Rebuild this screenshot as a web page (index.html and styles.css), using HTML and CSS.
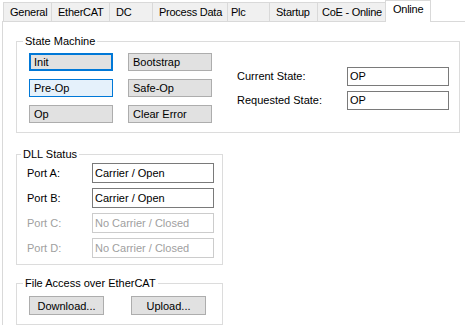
FILE: index.html
```html
<!DOCTYPE html>
<html lang="en">
  <head>
    <meta charset="UTF-8" />
    <title>Online</title>
    <link rel="stylesheet" href="styles.css">
  </head>
  <body>
    <div class="tabs">
      <div class="tab tab-general">General</div>
      <div class="tab tab-ethercat">EtherCAT</div>
      <div class="tab tab-dc">DC</div>
      <div class="tab tab-pdo">Process Data</div>
      <div class="tab tab-plc">Plc</div>
      <div class="tab tab-startup">Startup</div>
      <div class="tab tab-coe">CoE - Online</div>
      <div class="tab tab-online active">Online</div>
    </div>

    <div class="page">
      <fieldset class="group state-machine">
        <legend>State Machine</legend>
        <div class="sm-body">
          <div class="sm-buttons">
            <button class="btn focused">Init</button>
            <button class="btn">Bootstrap</button>
            <button class="btn hover">Pre-Op</button>
            <button class="btn">Safe-Op</button>
            <button class="btn">Op</button>
            <button class="btn">Clear Error</button>
          </div>
          <div class="sm-state">
            <label>Current State:</label>
            <div class="field">OP</div>
            <label>Requested State:</label>
            <div class="field">OP</div>
          </div>
        </div>
      </fieldset>

      <fieldset class="group dll">
        <legend>DLL Status</legend>
        <div class="dll-grid">
          <label>Port A:</label>
          <div class="field">Carrier / Open</div>
          <label>Port B:</label>
          <div class="field">Carrier / Open</div>
          <label class="disabled">Port C:</label>
          <div class="field disabled">No Carrier / Closed</div>
          <label class="disabled">Port D:</label>
          <div class="field disabled">No Carrier / Closed</div>
        </div>
      </fieldset>

      <fieldset class="group foe">
        <legend>File Access over EtherCAT</legend>
        <div class="foe-buttons">
          <button class="btn center">Download...</button>
          <button class="btn center">Upload...</button>
        </div>
      </fieldset>
    </div>
  </body>
</html>
```

FILE: styles.css
```css
body {
  margin: 0;
  background: #fff;
  font-family: "Liberation Sans", Arial, sans-serif;
  font-size: 11px;
  color: #000;
}

.tabs {
  display: flex;
  align-items: flex-end;
  height: 21px;
  padding-left: 3px;
  letter-spacing: -0.25px;
}

.tab {
  box-sizing: border-box;
  height: 19px;
  padding: 3px 0 0 6px;
  background: #f0f0f0;
  border-top: 1px solid #d9d9d9;
  border-left: 1px solid #d9d9d9;
  white-space: nowrap;
  overflow: hidden;
}

.tab-general { width: 48px; }
.tab-ethercat { width: 58px; }
.tab-dc { width: 43px; }
.tab-pdo { width: 75px; }
.tab-plc { width: 42px; padding-left: 3px; }
.tab-startup { width: 48px; }
.tab-coe { width: 68px; padding-left: 4px; }

.tab.active {
  position: relative;
  width: 46px;
  height: 22px;
  margin-bottom: -1px;
  padding: 2px 0 0 7px;
  background: #fff;
  border-right: 1px solid #d9d9d9;
}

.page {
  margin-left: 2px;
  border-top: 1px solid #d9d9d9;
  border-left: 1px solid #d9d9d9;
  padding: 13px 0 0 13px;
  display: flex;
  flex-direction: column;
  align-items: flex-start;
}

.group {
  margin: 0;
  border: 1px solid #dcdcdc;
  min-width: 0;
}

.group legend {
  line-height: 13px;
  padding: 0 2px;
  margin-left: -6px;
}

.state-machine {
  width: 444px;
  box-sizing: border-box;
  padding: 5px 9px 9px 12px;
}

.sm-body {
  display: flex;
  align-items: center;
}

.sm-buttons {
  display: grid;
  grid-template-columns: 84px 84px;
  grid-auto-rows: 18px;
  column-gap: 15px;
  row-gap: 8px;
}

.btn {
  box-sizing: border-box;
  margin: 0;
  padding: 0 0 0 4px;
  font: inherit;
  color: #000;
  text-align: left;
  background: #e1e1e1;
  border: 1px solid #adadad;
  border-radius: 0;
}

.btn.focused {
  border: 2px solid #0078d7;
  padding-left: 3px;
}

.btn.hover {
  background: #e5f1fb;
  border-color: #0078d7;
}

.btn.center {
  text-align: center;
  padding: 0;
}

.sm-state {
  margin-left: 25px;
  display: grid;
  grid-template-columns: 110px 102px;
  grid-auto-rows: 19px;
  row-gap: 5px;
  align-items: center;
}

.field {
  box-sizing: border-box;
  height: 100%;
  padding: 2px 0 0 2px;
  border: 1px solid #7a7a7a;
  background: #fff;
  white-space: nowrap;
}

.field.disabled {
  border-color: #cccccc;
  color: #a0a0a0;
}

label.disabled {
  color: #a0a0a0;
}

.dll {
  margin-top: 15px;
  width: 207px;
  box-sizing: border-box;
  padding: 2px 7px 6px 10px;
}

.dll-grid {
  display: grid;
  grid-template-columns: 65px 122px;
  grid-auto-rows: 20px;
  row-gap: 5px;
  align-items: center;
}

.dll .field {
  padding-top: 3px;
}

.foe {
  margin-top: 12px;
  width: 207px;
  box-sizing: border-box;
  padding: 6px 0 9px 12px;
}

.foe-buttons {
  display: flex;
  gap: 27px;
}

.foe-buttons .btn {
  width: 75px;
  height: 19px;
}
```
